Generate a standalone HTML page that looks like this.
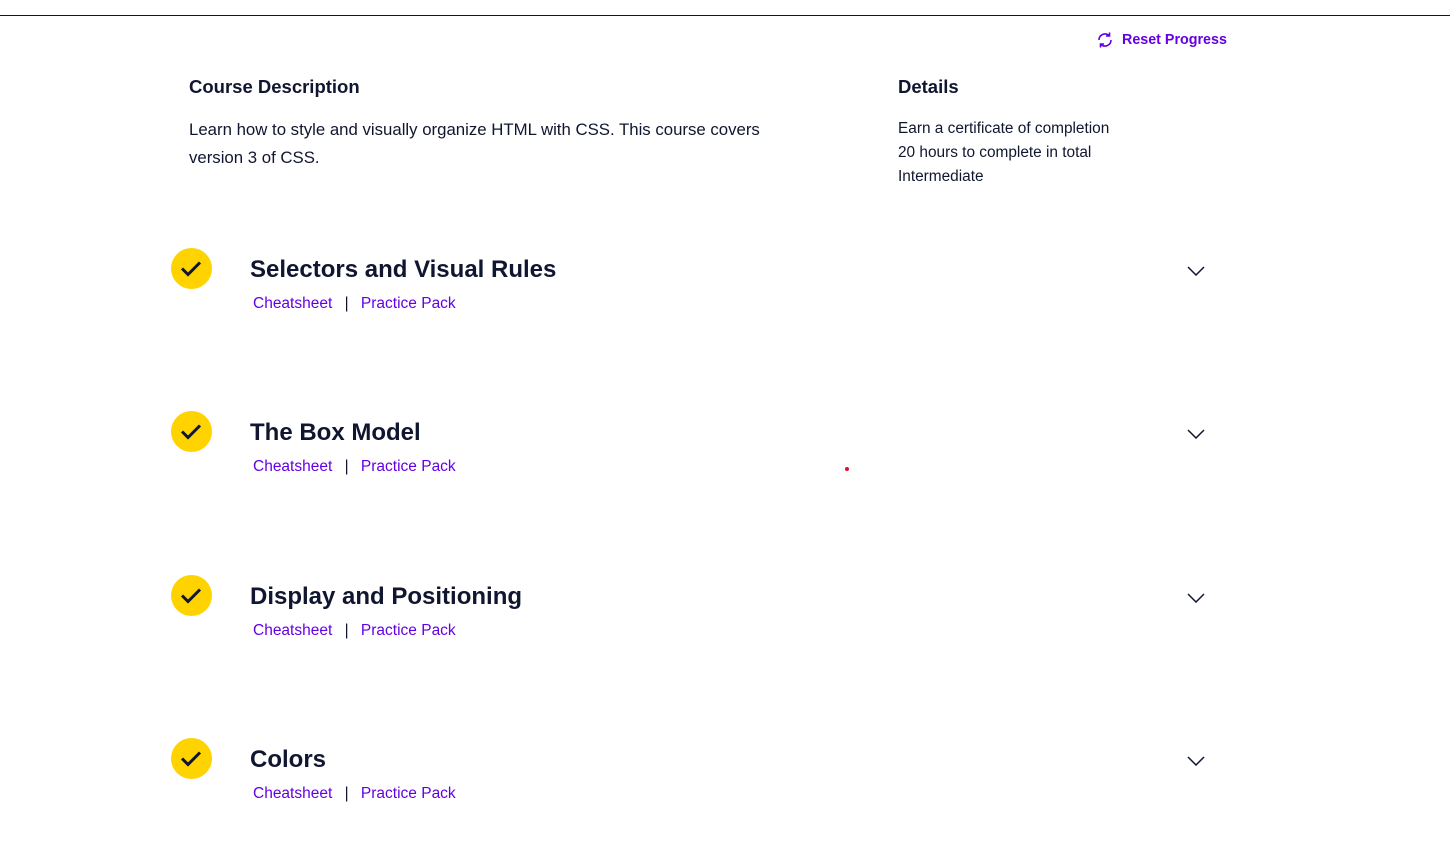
<!DOCTYPE html><html><head><style>
body{margin:0;width:1450px;height:854px;background:#fff;font-family:"Liberation Sans",sans-serif;color:#10162f;position:relative;overflow:hidden}
.a{position:absolute;white-space:nowrap}
.link{color:#6400e4;font-size:15.5px}
.c{position:absolute;left:171px;width:41px;height:41px;border-radius:50%;background:#ffd300}
.t{font-size:24px;font-weight:bold;left:250px}
</style></head><body>
<div class="a" style="left:0;top:15px;width:1450px;height:1px;background:#10162f"></div>
<svg class="a" style="left:1096px;top:31px" width="18" height="18" viewBox="0 0 18 18" fill="none" stroke="#6400e4" stroke-width="1.6"><path d="M3 9a6 6 0 0 1 10-4.5M15 9a6 6 0 0 1-10 4.5"/><path d="M13.5 1.5v3.5h-3.5M4.5 16.5v-3.5h3.5"/></svg>
<div class="a" style="left:1122px;top:32px;font-size:14.3px;font-weight:bold;color:#6400e4">Reset Progress</div>
<div class="a" style="left:189px;top:76px;font-size:18.5px;font-weight:bold">Course Description</div>
<div class="a" style="left:189px;top:116px;font-size:16.8px;line-height:28px;white-space:normal;width:620px">Learn how to style and visually organize HTML with CSS. This course covers version 3 of CSS.</div>
<div class="a" style="left:898px;top:76px;font-size:18.5px;font-weight:bold">Details</div>
<div class="a" style="left:898px;top:117px;font-size:15.4px;line-height:24px">Earn a certificate of completion<br>20 hours to complete in total<br>Intermediate</div>
<div id="s"></div>
<div class="a" style="left:845px;top:467px;width:4px;height:4px;border-radius:50%;background:#e0102a"></div>
<script>
var t=["Selectors and Visual Rules","The Box Model","Display and Positioning","Colors"],y=[248,411,575,738],h="";
for(var i=0;i<4;i++){var b=y[i];
h+='<div class="c" style="top:'+b+'px"><svg width="41" height="41" viewBox="0 0 41 41"><path d="M11 20.5l6 6 12-12" fill="none" stroke="#10162f" stroke-width="3"/></svg></div>';
h+='<div class="a t" style="top:'+(b+8)+'px">'+t[i]+'</div>';
h+='<div class="a link" style="left:253px;top:'+(b+47)+'px">Cheatsheet <span style="color:#10162f;margin:0 8px">|</span> Practice Pack</div>';
h+='<svg class="a" style="left:1187px;top:'+(b+18)+'px" width="18" height="10" viewBox="0 0 18 10"><path d="M1 1l8 8 8-8" fill="none" stroke="#10162f" stroke-width="1.5"/></svg>';}
document.getElementById("s").innerHTML=h;
</script>
</body></html>
